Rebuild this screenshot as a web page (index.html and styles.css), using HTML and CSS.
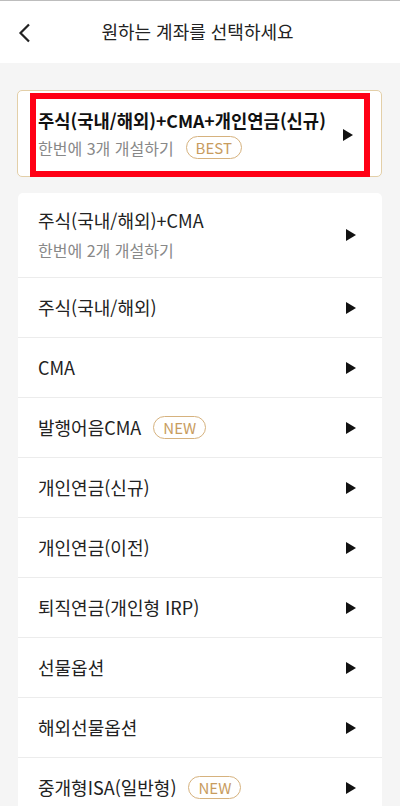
FILE: index.html
```html
<!DOCTYPE html>
<html lang="ko">
<head>
<meta charset="utf-8">
<link rel="stylesheet" href="styles.css">
</head>
<body>
<div class="page">
  <header class="header">
    <svg class="back" width="14" height="20" viewBox="0 0 14 20"><path d="M11 1.5 L2.5 10 L11 18.5" fill="none" stroke="#222" stroke-width="2.2"/></svg>
    <h1 class="title">원하는 계좌를 선택하세요</h1>
  </header>
  <main class="content">
    <div class="card best-card">
      <div class="highlight">
        <div class="row-text best-text">
          <div class="main bold">주식(국내/해외)+CMA+개인연금(신규)</div>
          <div class="sub">한번에 3개 개설하기 <span class="badge">BEST</span></div>
        </div>
        <span class="arrow"></span>
      </div>
    </div>
    <div class="card list">
      <div class="row tall"><div class="row-text"><div class="main">주식(국내/해외)+CMA</div><div class="sub">한번에 2개 개설하기</div></div><span class="arrow"></span></div>
      <div class="row"><div class="main">주식(국내/해외)</div><span class="arrow"></span></div>
      <div class="row"><div class="main">CMA</div><span class="arrow"></span></div>
      <div class="row"><div class="main">발행어음CMA <span class="badge">NEW</span></div><span class="arrow"></span></div>
      <div class="row"><div class="main">개인연금(신규)</div><span class="arrow"></span></div>
      <div class="row"><div class="main">개인연금(이전)</div><span class="arrow"></span></div>
      <div class="row"><div class="main">퇴직연금(개인형 IRP)</div><span class="arrow"></span></div>
      <div class="row"><div class="main">선물옵션</div><span class="arrow"></span></div>
      <div class="row"><div class="main">해외선물옵션</div><span class="arrow"></span></div>
      <div class="row"><div class="main">중개형ISA(일반형) <span class="badge">NEW</span></div><span class="arrow"></span></div>
    </div>
  </main>
</div>
</body>
</html>
```
FILE: styles.css
```css
* { box-sizing: border-box; margin: 0; padding: 0; }
html, body { width: 400px; height: 806px; overflow: hidden; }
body {
  font-family: "Noto Sans CJK KR", "Noto Sans", sans-serif;
  background: #f5f5f5;
  color: #222;
}
.page { display: flex; flex-direction: column; height: 806px; }
.header {
  flex-shrink: 0;
  height: 63px;
  background: #fff;
  border-top: 1px solid #bdbdbd;
  display: flex;
  align-items: center;
  justify-content: center;
  position: relative;
}
.back { position: absolute; left: 18px; top: 22px; }
.title { font-size: 18px; font-weight: 400; color: #222; margin-left: -5px; margin-bottom: 2px; }
.content { flex-shrink: 0; padding: 27px 18px 0 17px; display: flex; flex-direction: column; gap: 16px; }
.card { background: #fff; border-radius: 5px; }
.best-card {
  border: 1px solid #e3cfa8;
  height: 87px;
  padding: 2px 11px 0 12px;
}
.highlight {
  border: 6.5px solid #ff0015;
  height: 84px;
  display: flex;
  align-items: center;
  justify-content: space-between;
  padding: 0 11px 0 2px;
}
.row-text { display: flex; flex-direction: column; gap: 5px; }
.best-text { gap: 3px; margin-top: -3px; }
.main { font-size: 18px; line-height: 25px; color: #222; display: flex; align-items: center; }
.main.bold { font-weight: 700; color: #111; font-size: 17.7px; }
.sub { font-size: 16px; line-height: 24px; color: #888; display: flex; align-items: center; }
.badge {
  display: inline-flex;
  align-items: center;
  justify-content: center;
  height: 23px;
  padding: 0 9px;
  border: 1.5px solid #d6b27e;
  border-radius: 12px;
  color: #c89c5e;
  font-size: 15px;
  margin-left: 12px;
}
.arrow {
  flex-shrink: 0;
  width: 0; height: 0;
  border-top: 6px solid transparent;
  border-bottom: 6px solid transparent;
  border-left: 10px solid #111;
}
.list { margin-left: 1px; }
.row {
  height: 60px;
  border-top: 1px solid #ececec;
  display: flex;
  align-items: center;
  justify-content: space-between;
  padding: 0 26px 0 20px;
}
.row:first-child { border-top: none; }
.row.tall { height: 84px; }
```
